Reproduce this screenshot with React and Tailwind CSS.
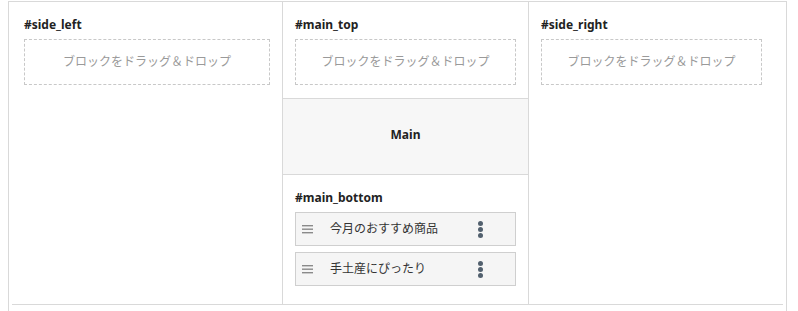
import React from 'react';

const FONT = { fontFamily: '"Noto Sans", "Noto Sans CJK JP", sans-serif' };

function DropZone() {
  return (
    <div className="h-[46px] border border-dashed border-[#c8c8c8] flex items-center justify-center text-[12px] text-[#9a9a9a]">
      ブロックをドラッグ＆ドロップ
    </div>
  );
}

function Title({ children }) {
  return <p className="text-[12px] font-bold leading-[16px] text-[#222] mb-[6px]">{children}</p>;
}

function BlockItem({ label }) {
  return (
    <div className="h-[34px] border border-[#cfcfcf] bg-[#f5f5f5] flex items-center pl-[6px] pr-[32px]">
      <svg width="11" height="10" viewBox="0 0 11 10" className="flex-shrink-0">
        <rect x="0" y="1" width="11" height="1.4" fill="#8a8a8a" />
        <rect x="0" y="4.5" width="11" height="1.4" fill="#8a8a8a" />
        <rect x="0" y="8" width="11" height="1.4" fill="#8a8a8a" />
      </svg>
      <span className="ml-[17px] flex-1 text-[12px] text-[#333]">{label}</span>
      <div className="flex flex-col gap-[1px]">
        <span className="w-[5px] h-[5px] rounded-full bg-[#52606e]" />
        <span className="w-[5px] h-[5px] rounded-full bg-[#52606e]" />
        <span className="w-[5px] h-[5px] rounded-full bg-[#52606e]" />
      </div>
    </div>
  );
}

export default function App() {
  return (
    <div className="w-[798px] h-[311px] overflow-hidden bg-white" style={FONT}>
      <div className="ml-[8px] mt-[1px] w-[779px] h-[330px] border-t border-l border-r border-[#d9d9d9]">
        <div className="mx-[3px] flex border-b border-[#d9d9d9]">
          {/* side_left */}
          <div className="w-[271px] border-r border-[#d9d9d9] pl-[12px] pr-[12px] pt-[15px]">
            <Title>#side_left</Title>
            <DropZone />
          </div>

          {/* main */}
          <div className="w-[246px] border-r border-[#d9d9d9] flex flex-col">
            <div className="px-[12px] pt-[15px] pb-[13px] border-b border-[#d9d9d9]">
              <Title>#main_top</Title>
              <DropZone />
            </div>
            <div className="h-[76px] pb-[3px] bg-[#f7f7f7] border-b border-[#d9d9d9] flex items-center justify-center text-[12px] font-bold text-[#222]">
              Main
            </div>
            <div className="px-[12px] pt-[15px] pb-[18px]">
              <Title>#main_bottom</Title>
              <div className="flex flex-col gap-[6px]">
                <BlockItem label="今月のおすすめ商品" />
                <BlockItem label="手土産にぴったり" />
              </div>
            </div>
          </div>

          {/* side_right */}
          <div className="flex-1 pl-[12px] pr-[21px] pt-[15px]">
            <Title>#side_right</Title>
            <DropZone />
          </div>
        </div>
      </div>
    </div>
  );
}
